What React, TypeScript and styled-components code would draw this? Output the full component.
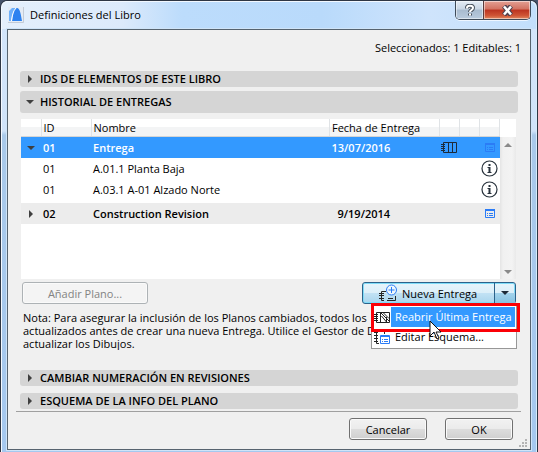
import React from "react";
import styled, { createGlobalStyle, css } from "styled-components";

const Global = createGlobalStyle`
  *, *::before, *::after { box-sizing: border-box; }
  body { margin: 0; background: #46536b; }
  body, button, table {
    font-family: "Open Sans", "Noto Sans", sans-serif;
    font-size: 11px;
    line-height: 13px;
    color: #000;
  }
  button { margin: 0; padding: 0; cursor: default; white-space: nowrap; }
`;

const Window = styled.div`
  display: flex;
  flex-direction: column;
  min-height: 100vh;
  padding: 0 5px 2px;
  border: solid #2e3644;
  border-width: 1px 1px 0 1px;
  border-radius: 7px 7px 0 0;
  background: linear-gradient(180deg, #d3e5fa 0, #d0e3f9 130px, #a9c9ea 134px, #a5c8ef 100%);
  box-shadow: inset 1px 1px 0 #f4f9ff, inset -1px 0 0 #d6ecfb;
`;

const TitleBar = styled.header`
  display: flex;
  align-items: flex-start;
  height: 28px;
  margin: 0 -4px;
  padding: 0 5px 0 6px;
  border-radius: 6px 6px 0 0;
  background: linear-gradient(90deg, #e4effc 0, #dceafb 120px, #bcdcfc 180px, #b9dafb 60%, #cfe4fc 80%, #c2dffb 100%);
  box-shadow: inset 0 1px 0 #f2f8ff;
`;

const AppIcon = styled.svg`
  flex: none;
  width: 16px;
  height: 16px;
  margin-top: 6px;
`;

const Title = styled.h1`
  flex: 1;
  margin: 6px 0 0 6px;
  font-size: 11px;
  line-height: 16px;
  font-weight: 400;
`;

const Captions = styled.div`
  display: flex;
  height: 19px;
  border: 1px solid #3f4b59;
  border-top: 0;
  border-radius: 0 0 5px 5px;
  overflow: hidden;
  box-shadow: 0 1px 0 #eef6ff;
`;

const CaptionButton = styled.button<{ $close?: boolean }>`
  display: flex;
  align-items: center;
  justify-content: center;
  border: 0;
  width: ${(p) => (p.$close ? 47 : 27)}px;
  background: ${(p) =>
    p.$close
      ? "linear-gradient(180deg, #e3a094 0, #d27261 45%, #bb3320 50%, #cf5435 80%, #e08a62 100%)"
      : "linear-gradient(180deg, #e3ebf4 0, #c9d6e4 45%, #a8bbcf 50%, #b9cbde 100%)"};
  border-left: ${(p) => (p.$close ? "1px solid #5b3b3c" : "0")};
  box-shadow: inset 0 0 0 1px rgba(255, 255, 255, 0.5);
`;

const Client = styled.main`
  display: flex;
  flex: 1;
  flex-direction: column;
  padding: 10px 9px 8px 8px;
  margin: 0 1px;
  border: 1px solid #56636f;
  background: #f0f0f0;
  box-shadow: 0 0 0 1px #cfe4f8;
`;

const Status = styled.p`
  margin: 0;
  text-align: right;
  line-height: 16px;
`;

const Sections = styled.div`
  padding: 15px 3px 0 4px;
`;

const SectionHead = styled.button<{ $tall?: boolean; $gap?: number }>`
  display: flex;
  align-items: center;
  width: 100%;
  height: ${(p) => (p.$tall ? 22 : 16)}px;
  margin-top: ${(p) => p.$gap ?? 0}px;
  padding: 0 6px;
  border: 0;
  border-radius: 3px;
  background: #d5d5d5;
  line-height: 16px;
  font-weight: 600;
`;

const ArrowIcon = styled.svg`
  display: block;
  flex: none;
  width: 8px;
  height: 8px;
  fill: #3f3f3f;
`;

const SectionLabel = styled.span`
  margin-left: 6px;
`;

const ListArea = styled.div`
  display: flex;
  margin: 6px 2px 0 1px;
  min-height: 160px;
  background: #fff;
`;

const Table = styled.table`
  flex: 1;
  align-self: flex-start;
  table-layout: fixed;
  border-collapse: collapse;
`;

const HeadCell = styled.th<{ $w?: number }>`
  width: ${(p) => (p.$w ? `${p.$w}px` : "auto")};
  height: 17px;
  padding: 0 0 0 2px;
  border-right: 1px solid #e0e3e6;
  border-bottom: 1px solid #d5d5d5;
  background: linear-gradient(180deg, #fff 50%, #f3f4f5 50%);
  text-align: left;
  font-weight: 400;
`;

const Spacer = styled.tr<{ $h: number }>`
  height: ${(p) => p.$h}px;
`;

const BlankCell = styled.td`
  padding: 0;
`;

const Row = styled.tr<{ $kind?: "selected" | "group" }>`
  height: 21px;
  ${(p) =>
    p.$kind === "selected" &&
    css`
      background: #3399ff;
      color: #fff;
      font-weight: 600;
    `}
  ${(p) =>
    p.$kind === "group" &&
    css`
      background: #ececec;
      font-weight: 600;
    `}
`;

const Cell = styled.td<{ $icon?: boolean; $indent?: boolean }>`
  padding: 0 0 0 ${(p) => (p.$icon ? 0 : p.$indent ? 8 : 2)}px;
  white-space: nowrap;
  svg { display: block; margin: 0 auto; }
`;

const ScrollBar = styled.div`
  display: flex;
  flex: none;
  flex-direction: column;
  justify-content: space-between;
  align-items: center;
  width: 16px;
  margin-top: 18px;
  padding: 6px 0 5px;
  background: linear-gradient(90deg, #e4e4e4, #f0f0f0 3px, #f3f3f3 12px, #e9e9e9);
`;

const Actions = styled.div`
  display: flex;
  justify-content: space-between;
  margin: 3px 2px 0;
`;

const PushButton = styled.button<{ $w: number }>`
  width: ${(p) => p.$w}px;
  height: 22px;
  border: 1px solid #707070;
  border-radius: 3px;
  background: linear-gradient(180deg, #f2f2f2 0, #ebebeb 48%, #dddddd 50%, #cfcfcf 100%);
  box-shadow: inset 0 0 0 1px #fafafa;
  &:disabled {
    border-color: #adb2b5;
    background: #f4f4f4;
    color: #838383;
  }
`;

const SplitButton = styled.div`
  position: relative;
  display: flex;
  width: 154px;
  height: 22px;
  border: 1px solid #2c628b;
  border-radius: 3px;
  background: linear-gradient(180deg, #e8f4fb 0, #dceff9 48%, #c2e2f4 50%, #a9d5ee 100%);
  box-shadow: inset 0 0 0 1px #7fdcf8;
`;

const MainAction = styled.button`
  display: flex;
  flex: 1;
  align-items: center;
  gap: 4px;
  padding-left: 16px;
  border: 0;
  background: none;
`;

const DropAction = styled.button`
  display: flex;
  align-items: center;
  justify-content: center;
  width: 21px;
  border: 0;
  border-left: 1px solid #2c628b;
  background: linear-gradient(180deg, transparent 48%, #a3d3ec 50%, #86c2e2 100%);
`;

const Menu = styled.div`
  position: absolute;
  z-index: 1;
  top: 22px;
  right: -2px;
  width: 146px;
  padding: 1px;
  border: 1px solid #979797;
  background: #fff;
`;

const MenuItem = styled.button<{ $active?: boolean }>`
  display: flex;
  align-items: center;
  width: 100%;
  height: 20px;
  border: 0;
  background: #fff;
  text-align: left;
  svg { flex: none; margin: 0 1px; }
  span {
    flex: 1;
    padding-left: 4px;
    line-height: 20px;
    background: ${(p) => (p.$active ? "#3399ff" : "none")};
    color: ${(p) => (p.$active ? "#fff" : "#000")};
  }
`;

const Highlight = styled.div`
  position: absolute;
  z-index: 2;
  top: 20px;
  right: -5px;
  width: 149px;
  height: 29px;
  border: 3px solid #fb0007;
  pointer-events: none;
`;

const Pointer = styled.svg`
  position: absolute;
  z-index: 3;
  top: 37px;
  left: 66px;
  pointer-events: none;
`;

const Note = styled.p`
  margin: 7px 2px 0 3px;
  white-space: nowrap;
  overflow: hidden;
`;

const Footer = styled.footer`
  position: relative;
  display: flex;
  justify-content: flex-end;
  gap: 18px;
  margin-top: 2px;
  padding: 6px 8px 0;
  border-top: 1px solid #a0a0a0;
`;

const Grip = styled.svg`
  position: absolute;
  right: -7px;
  bottom: -8px;
  fill: #b4b4b4;
`;

const Arrow = ({ open }: { open?: boolean }) => (
  <ArrowIcon viewBox="0 0 8 8" aria-hidden="true">
    <path d={open ? "M0 2h8L4 6z" : "M2 0v8l4-4z"} />
  </ArrowIcon>
);

const Triangle = ({ up, color }: { up?: boolean; color: string }) => (
  <svg width="8" height="4" viewBox="0 0 8 4" aria-hidden="true">
    <path d={up ? "M0 4h8L4 0z" : "M0 0h8L4 4z"} fill={color} />
  </svg>
);

const BookIcon = () => (
  <svg width="17" height="12" viewBox="0 0 17 12" fill="none" stroke="#1e2b38" aria-hidden="true">
    <path d="M2.5.5h13v10h-13zM7.5.5v10M11.5.5v10" />
    <path d="M0 2.5h4M0 4.5h4M0 6.5h4M0 8.5h4" />
  </svg>
);

const SchemeIcon = ({ color = "#2b7cf6" }: { color?: string }) => (
  <svg width="10" height="9" viewBox="0 0 10 9" aria-hidden="true">
    <path d="M.5.5h9v8h-9z" fill="none" stroke={color} />
    <path d="M0 0h10v2H0zM2 4h1v1H2zM4 4h4v1H4zM2 6h1v1H2zM4 6h4v1H4z" fill={color} />
  </svg>
);

const InfoIcon = () => (
  <svg width="17" height="17" viewBox="0 0 17 17" aria-hidden="true">
    <circle cx="8.5" cy="8.5" r="7.5" fill="#fff" stroke="#28323c" strokeWidth="1.2" />
    <path d="M7.500 4h2v2h-2zM6.500 7h3v5h1v1h-4v-1h1V8h-1z" fill="#28323c" />
  </svg>
);

const NewIssueIcon = () => (
  <svg width="19" height="18" viewBox="0 0 19 18" fill="none" stroke="#252525" aria-hidden="true">
    <path d="M7 7.500H2.500v9H5M8 16.500h8.500V12M9 14.500h5" />
    <path d="M0 9.500h5M0 11.500h5M0 14.500h5" />
    <circle cx="12.500" cy="6" r="5" fill="#eef7fc" stroke="#2b7cf6" />
    <path d="M12.500 3v6M9.500 6h6" stroke="#2b7cf6" />
  </svg>
);

const ReopenIcon = () => (
  <svg width="16" height="16" viewBox="0 0 16 16" fill="none" stroke="#222" aria-hidden="true">
    <path d="M2.500 3.500h13v10h-13zM6.500 3.500v10M12.500 8v5.500" />
    <path d="M0 5.500h4M0 7.500h4M0 9.500h4M0 11.500h4" />
    <path d="M7 4l8 8M9.500 4l5.500 5.500M7.500 7l5 6" />
  </svg>
);

const EditSchemeIcon = () => (
  <svg width="16" height="16" viewBox="0 0 16 16" fill="none" stroke="#252525" aria-hidden="true">
    <path d="M2.500 1v13.500H5M2.500 1.500h8V5M0 3.500h4M0 6.500h4M0 9.500h4M0 12.500h4" />
    <path d="M6.500 6.500h9v8h-9z" fill="#fff" stroke="#2b7cf6" />
    <path d="M6 7.500h10M8 10.500h1M10 10.500h4M8 12.500h1M10 12.500h4" stroke="#2b7cf6" />
  </svg>
);

export default function App() {
  return (
    <>
      <Global />
      <Window>
        <TitleBar>
          <AppIcon viewBox="0 0 16 16" aria-hidden="true">
            <path d="M0 0h16v16H0z" fill="#e4ebf5" />
            <path d="M15.500 0v15.500H0" fill="none" stroke="#c3cbd6" />
            <path d="M1 14V4l3-3h4C5 4 4 9 3 14z" fill="#6fb0fa" />
            <path d="M4 14C5 8 6 1 9 1c3 0 4 7 5 13z" fill="#2d82f0" />
            <path d="M8 1C5 4 4 9 3.500 14" stroke="#fff" fill="none" />
          </AppIcon>
          <Title>Definiciones del Libro</Title>
          <Captions>
            <CaptionButton aria-label="Ayuda">
              <svg width="10" height="13" viewBox="0 0 10 13" fill="none" aria-hidden="true">
                <path d="M2 4.500V4c0-3 6-3 6 0 0 2-3 2-3 4M5 9.500v2" stroke="#47505c" strokeWidth="4" />
                <path d="M2 4.500V4c0-3 6-3 6 0 0 2-3 2-3 4M5 9.500v2" stroke="#fff" strokeWidth="2" />
              </svg>
            </CaptionButton>
            <CaptionButton $close aria-label="Cerrar">
              <svg width="13" height="11" viewBox="0 0 13 11" fill="none" aria-hidden="true">
                <path d="M3 1l7 9M10 1l-7 9" stroke="#4e4250" strokeWidth="5" />
                <path d="M3 1.500l7 8M10 1.500l-7 8" stroke="#fff" strokeWidth="2.500" />
              </svg>
            </CaptionButton>
          </Captions>
        </TitleBar>
        <Client>
          <Status>Seleccionados: 1 Editables: 1</Status>
          <Sections>
            <SectionHead aria-expanded="false">
              <Arrow />
              <SectionLabel>IDS DE ELEMENTOS DE ESTE LIBRO</SectionLabel>
            </SectionHead>
            <SectionHead $tall $gap={4} aria-expanded="true">
              <Arrow open />
              <SectionLabel>HISTORIAL DE ENTREGAS</SectionLabel>
            </SectionHead>
            <ListArea>
              <Table>
                <thead>
                  <tr>
                    <HeadCell $w={20} aria-label="Expandir" />
                    <HeadCell $w={50}>ID</HeadCell>
                    <HeadCell>Nombre</HeadCell>
                    <HeadCell $w={110}>Fecha de Entrega</HeadCell>
                    <HeadCell $w={20} aria-label="Libro" />
                    <HeadCell $w={20} aria-label="Estado" />
                    <HeadCell $w={20} aria-label="Info" />
                  </tr>
                </thead>
                <tbody>
                  <Spacer $h={1}><BlankCell colSpan={7} /></Spacer>
                  <Row $kind="selected">
                    <Cell $icon><Arrow open /></Cell>
                    <Cell>01</Cell>
                    <Cell>Entrega</Cell>
                    <Cell>13/07/2016</Cell>
                    <Cell $icon><BookIcon /></Cell>
                    <Cell />
                    <Cell $icon><SchemeIcon /></Cell>
                  </Row>
                  <Row>
                    <Cell />
                    <Cell>01</Cell>
                    <Cell>A.01.1 Planta Baja</Cell>
                    <Cell />
                    <Cell />
                    <Cell />
                    <Cell $icon><InfoIcon /></Cell>
                  </Row>
                  <Row>
                    <Cell />
                    <Cell>01</Cell>
                    <Cell>A.03.1 A-01 Alzado Norte</Cell>
                    <Cell />
                    <Cell />
                    <Cell />
                    <Cell $icon><InfoIcon /></Cell>
                  </Row>
                  <Spacer $h={3}><BlankCell colSpan={7} /></Spacer>
                  <Row $kind="group">
                    <Cell $icon><Arrow /></Cell>
                    <Cell>02</Cell>
                    <Cell>Construction Revision</Cell>
                    <Cell $indent>9/19/2014</Cell>
                    <Cell />
                    <Cell />
                    <Cell $icon><SchemeIcon /></Cell>
                  </Row>
                </tbody>
              </Table>
              <ScrollBar aria-hidden="true">
                <Triangle up color="#8a8a8a" />
                <Triangle color="#8a8a8a" />
              </ScrollBar>
            </ListArea>
            <Actions>
              <PushButton $w={126} disabled>Añadir Plano...</PushButton>
              <SplitButton>
                <MainAction>
                  <NewIssueIcon />
                  Nueva Entrega
                </MainAction>
                <DropAction aria-label="Más opciones" aria-haspopup="menu" aria-expanded="true">
                  <Triangle color="#1d2b38" />
                </DropAction>
                <Menu role="menu">
                  <MenuItem role="menuitem" $active>
                    <ReopenIcon />
                    <span>Reabrir Última Entrega</span>
                  </MenuItem>
                  <MenuItem role="menuitem">
                    <EditSchemeIcon />
                    <span>Editar Esquema...</span>
                  </MenuItem>
                </Menu>
                <Highlight />
                <Pointer width="13" height="20" viewBox="0 0 13 20" aria-hidden="true">
                  <path d="M1 1v15l4-4 3 7 2-1-3-6h5z" fill="#fff" stroke="#111" />
                </Pointer>
              </SplitButton>
            </Actions>
            <Note>
              Nota: Para asegurar la inclusión de los Planos cambiados, todos los
              <br />
              actualizados antes de crear una nueva Entrega. Utilice el Gestor de Dibujos
              <br />
              actualizar los Dibujos.
            </Note>
            <SectionHead $gap={20} aria-expanded="false">
              <Arrow />
              <SectionLabel>CAMBIAR NUMERACIÓN EN REVISIONES</SectionLabel>
            </SectionHead>
            <SectionHead $gap={7} aria-expanded="false">
              <Arrow />
              <SectionLabel>ESQUEMA DE LA INFO DEL PLANO</SectionLabel>
            </SectionHead>
          </Sections>
          <Footer>
            <PushButton $w={78}>Cancelar</PushButton>
            <PushButton $w={68}>OK</PushButton>
            <Grip width="9" height="9" viewBox="0 0 9 9" aria-hidden="true">
              <path d="M6 0h2v2H6zM3 3h2v2H3zM6 3h2v2H6zM0 6h2v2H0zM3 6h2v2H3zM6 6h2v2H6z" />
            </Grip>
          </Footer>
        </Client>
      </Window>
    </>
  );
}
